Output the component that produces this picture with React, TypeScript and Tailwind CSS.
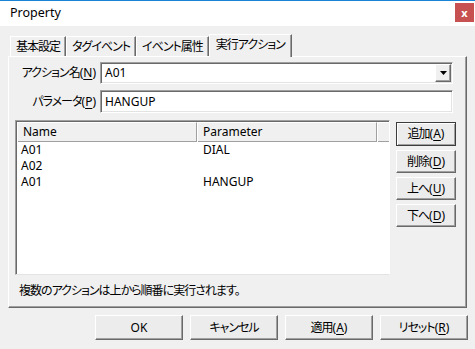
const rows = [
  { name: "A01", param: "DIAL" },
  { name: "A02", param: "" },
  { name: "A01", param: "HANGUP" },
];

// Japanese text runs narrower in the original UI font
function J({ children }: { children: React.ReactNode }) {
  return <span className="tracking-[-1px]">{children}</span>;
}

function Mn({ k }: { k: string }) {
  return (
    <>
      (<span className="underline underline-offset-[2px]">{k}</span>)
    </>
  );
}

function Tab({ label, active }: { label: string; active?: boolean }) {
  if (active) {
    return (
      <div className="relative z-10 -mb-px h-[23px] border-l border-t border-white border-r border-r-[#696969] bg-[#f0f0f0] px-[6px] leading-[20px] shadow-[inset_-1px_0_0_#a0a0a0]">
        <J>{label}</J>
      </div>
    );
  }
  return (
    <div className="h-[20px] border-l border-t border-white border-r border-r-[#696969] px-[5px] leading-[19px] shadow-[inset_-1px_0_0_#a0a0a0]">
      <J>{label}</J>
    </div>
  );
}

function Btn({
  children,
  className = "",
  isDefault,
}: {
  children: React.ReactNode;
  className?: string;
  isDefault?: boolean;
}) {
  const frame = isDefault
    ? "border border-[#3c3c3c] shadow-[inset_1px_1px_0_#fff,inset_-1px_-1px_0_#a0a0a0]"
    : "border border-t-white border-l-white border-r-[#696969] border-b-[#696969] shadow-[inset_-1px_-1px_0_#a0a0a0]";
  return (
    <div
      className={`flex items-center justify-center bg-[#ececec] ${frame} ${className}`}
    >
      {children}
    </div>
  );
}

export default function App() {
  return (
    <div className="h-[349px] w-[475px] overflow-hidden bg-[#f0f0f0] font-['Noto_Sans','Noto_Sans_CJK_JP',sans-serif] text-[12px] text-black [font-feature-settings:'palt']">
      {/* title bar */}
      <div className="flex h-[26px] items-start justify-between border-t border-[#1883d7] bg-white">
        <span className="pl-[10px] pt-[3px] text-[12.5px] leading-[18px]">Property</span>
        <div className="mr-[1px] mt-[2px] flex h-[19px] w-[19px] items-center justify-center bg-[#c75050] text-[11px] font-bold leading-none text-white">
          x
        </div>
      </div>

      <div className="px-[8px] pt-[8px]">
        {/* tabs */}
        <div className="flex h-[22px] items-end pl-[2px]">
          <Tab label="基本設定" />
          <Tab label="タグイベント" />
          <Tab label="イベント属性" />
          <Tab label="実行アクション" active />
        </div>

        {/* panel */}
        <div className="h-[252px] border-l border-t border-white border-r border-b border-r-[#696969] border-b-[#696969] pt-[5px] shadow-[inset_-1px_-1px_0_#a0a0a0]">
          <div className="flex h-[22px] items-center">
            <div className="w-[91px] pr-[4px] text-right">
              <J>アクション名</J>
              <Mn k="N" />
            </div>
            <div className="flex h-[22px] w-[353px] items-center justify-between border border-t-[#a0a0a0] border-l-[#a0a0a0] border-r-white border-b-white bg-white shadow-[inset_1px_1px_0_#696969,inset_-1px_-1px_0_#e3e3e3]">
              <span className="pl-[4px]">A01</span>
              <div className="mr-px flex h-[18px] w-[16px] items-center justify-center border border-t-white border-l-white border-r-[#696969] border-b-[#696969] bg-[#f0f0f0] shadow-[inset_-1px_-1px_0_#a0a0a0]">
                <svg width="7" height="4" viewBox="0 0 7 4">
                  <path d="M0 0h7L3.5 4z" fill="#000" />
                </svg>
              </div>
            </div>
          </div>

          <div className="mt-[6px] flex h-[23px] items-center">
            <div className="w-[91px] pr-[4px] text-right">
              <J>パラメータ</J>
              <Mn k="P" />
            </div>
            <div className="flex h-[23px] w-[353px] items-center border border-t-[#a0a0a0] border-l-[#a0a0a0] border-r-white border-b-white bg-white shadow-[inset_1px_1px_0_#696969,inset_-1px_-1px_0_#e3e3e3]">
              <span className="pl-[4px]">HANGUP</span>
            </div>
          </div>

          <div className="mt-[7px] flex">
            {/* list view */}
            <div className="ml-[6px] h-[155px] w-[375px] border border-t-[#a0a0a0] border-l-[#a0a0a0] border-r-white border-b-[#e3e3e3] bg-white shadow-[inset_1px_1px_0_#696969]">
              <div className="ml-px mt-px flex h-[20px] bg-[#f0f0f0] shadow-[inset_0_-1px_0_#a0a0a0]">
                <div className="w-[180px] border-l border-t border-white border-r border-r-[#a0a0a0] pl-[5px] leading-[18px]">
                  Name
                </div>
                <div className="w-[180px] border-l border-t border-white border-r border-r-[#a0a0a0] pl-[5px] leading-[18px]">
                  Parameter
                </div>
                <div className="flex-1 border-l border-t border-white" />
              </div>
              <div className="ml-px">
                {rows.map((r, i) => (
                  <div key={i} className="flex h-[16px] leading-[16px]">
                    <div className="w-[180px] pl-[4px]">{r.name}</div>
                    <div className="w-[180px] pl-[6px]">{r.param}</div>
                  </div>
                ))}
              </div>
            </div>

            <div className="ml-[6px] mt-[2px] flex flex-col gap-[4px]">
              <Btn isDefault className="h-[24px] w-[60px]">
                <J>追加</J>
                <Mn k="A" />
              </Btn>
              <Btn className="h-[23px] w-[60px]">
                <J>削除</J>
                <Mn k="D" />
              </Btn>
              <Btn className="h-[23px] w-[60px]">
                <J>上へ</J>
                <Mn k="U" />
              </Btn>
              <Btn className="h-[23px] w-[60px]">
                <J>下へ</J>
                <Mn k="D" />
              </Btn>
            </div>
          </div>

          <div className="ml-[10px] mt-[8px] leading-[16px]">
            <J>複数のアクションは上から順番に実行されます。</J>
          </div>
        </div>
      </div>

      {/* bottom buttons */}
      <div className="mt-[7px] flex justify-end gap-[7px] pr-[7px]">
        <Btn className="h-[25px] w-[88px]">OK</Btn>
        <Btn className="h-[25px] w-[88px]">
          <J>キャンセル</J>
        </Btn>
        <Btn className="h-[25px] w-[88px]">
          <J>適用</J>
          <Mn k="A" />
        </Btn>
        <Btn className="h-[25px] w-[88px]">
          <J>リセット</J>
          <Mn k="R" />
        </Btn>
      </div>
    </div>
  );
}
